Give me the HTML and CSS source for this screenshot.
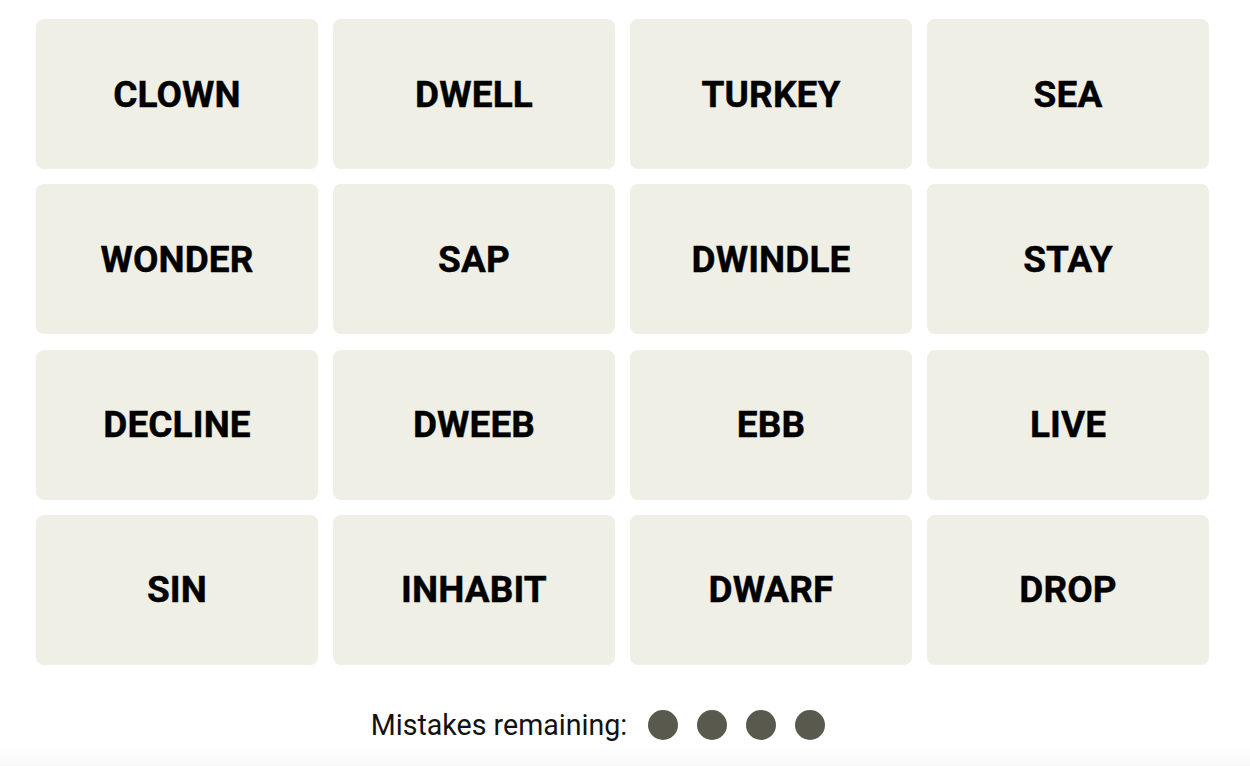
FILE: index.html
```html
<!DOCTYPE html>
<html lang="en">
<head>
<meta charset="utf-8">
<title>Connections</title>
<link rel="stylesheet" href="styles.css">
</head>
<body>
<main class="page">
  <section class="board">
    <div class="tile">CLOWN</div>
    <div class="tile">DWELL</div>
    <div class="tile">TURKEY</div>
    <div class="tile">SEA</div>
    <div class="tile">WONDER</div>
    <div class="tile">SAP</div>
    <div class="tile">DWINDLE</div>
    <div class="tile">STAY</div>
    <div class="tile">DECLINE</div>
    <div class="tile">DWEEB</div>
    <div class="tile">EBB</div>
    <div class="tile">LIVE</div>
    <div class="tile">SIN</div>
    <div class="tile">INHABIT</div>
    <div class="tile">DWARF</div>
    <div class="tile">DROP</div>
  </section>
  <section class="mistakes">
    <span class="mistakes-label">Mistakes remaining:</span>
    <span class="dots">
      <span class="dot"></span>
      <span class="dot"></span>
      <span class="dot"></span>
      <span class="dot"></span>
    </span>
  </section>
  <div class="footer-fade"></div>
</main>
</body>
</html>
```

FILE: styles.css
```css
html, body {
  margin: 0;
  padding: 0;
  background: #ffffff;
}

body {
  width: 1250px;
  height: 766px;
  overflow: hidden;
  font-family: Roboto, "Liberation Sans", sans-serif;
  color: #000;
}

.page {
  display: flex;
  flex-direction: column;
  height: 766px;
}

.board {
  display: grid;
  grid-template-columns: repeat(4, 282px);
  grid-template-rows: repeat(4, 150px);
  column-gap: 15px;
  row-gap: 15.3px;
  padding: 19px 0 0 36px;
}

.tile {
  background: #efefe6;
  border-radius: 8px;
  display: flex;
  align-items: center;
  justify-content: center;
  font-weight: 700;
  font-size: 37px;
  letter-spacing: 0.1px;
  text-transform: uppercase;
  -webkit-text-stroke: 0.4px #000;
}

.mistakes {
  display: flex;
  align-items: center;
  justify-content: center;
  padding: 44px 54px 0 0;
  height: 32px;
}

.mistakes-label {
  font-size: 28.6px;
  font-weight: 400;
  color: #121212;
  margin-right: 21px;
}

.dots {
  display: flex;
  gap: 19px;
}

.dot {
  width: 30px;
  height: 30px;
  border-radius: 50%;
  background: #5a594e;
}

.footer-fade {
  margin-top: auto;
  height: 20px;
  background: linear-gradient(#ffffff, #f8f8f8);
}
```
